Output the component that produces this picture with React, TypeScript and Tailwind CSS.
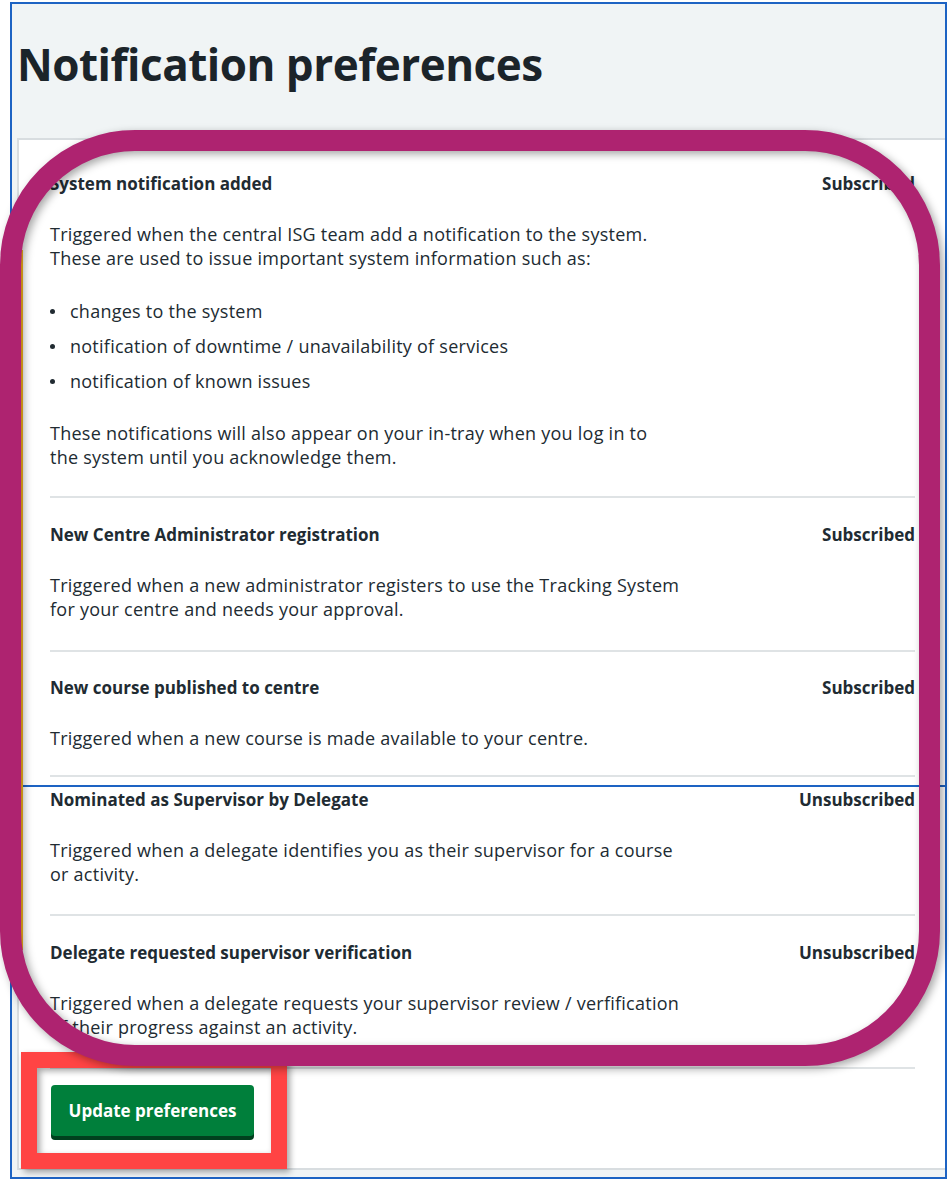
import React from 'react';

const body = { fontFamily: '"Open Sans", "Liberation Sans", sans-serif' };

interface RowProps {
  title: string;
  status: string;
  children: React.ReactNode;
  className?: string;
}

function PrefRow({ title, status, children, className }: RowProps) {
  return (
    <div className={className}>
      <div className="flex justify-between text-[17px] leading-6 font-bold text-[#212b32]">
        <span>{title}</span>
        <span>{status}</span>
      </div>
      <div className="mt-[26px] text-[18px] leading-6 tracking-[0.25px] text-[#212b32]">{children}</div>
    </div>
  );
}

export default function App() {
  return (
    <div className="relative w-[949px] h-[1181px] bg-white overflow-hidden" style={body}>
      <div className="relative ml-[10px] mt-[2px] w-[937px] h-[1177px] border-2 border-[#1d63c3] bg-[#f0f4f5]">
        <h1 className="pt-[32px] pl-[5px] text-[44px] leading-[56px] font-bold text-[#1b242a] tracking-[-0.5px]">
          Notification preferences
        </h1>

        <div className="mt-[46px] ml-[5px] bg-white border-2 border-r-0 border-[#d8dde0] pl-[31px] pr-[30px] pt-[32px] pb-[32px]">
          <PrefRow title="System notification added" status="Subscribed" className="border-b-2 border-[#dfe3e5] pb-[27px]">
            <p>
              Triggered when the central ISG team add a notification to the system.
              <br />
              These are used to issue important system information such as:
            </p>
            <ul className="mt-[29px]">
              {['changes to the system', 'notification of downtime / unavailability of services', 'notification of known issues'].map((t) => (
                <li key={t} className="flex items-center mb-[11px]">
                  <span className="w-5 shrink-0">
                    <span className="block w-[5px] h-[5px] rounded-full bg-[#212b32]" />
                  </span>
                  <span>{t}</span>
                </li>
              ))}
            </ul>
            <p className="mt-[28px]">
              These notifications will also appear on your in-tray when you log in to
              <br />
              the system until you acknowledge them.
            </p>
          </PrefRow>

          <PrefRow title="New Centre Administrator registration" status="Subscribed" className="pt-[25px] pb-[29px] border-b-2 border-[#dfe3e5]">
            <p>
              Triggered when a new administrator registers to use the Tracking System
              <br />
              for your centre and needs your approval.
            </p>
          </PrefRow>

          <PrefRow title="New course published to centre" status="Subscribed" className="pt-[24px] pb-[25px] border-b-2 border-[#dfe3e5]">
            <p>Triggered when a new course is made available to your centre.</p>
          </PrefRow>

          <PrefRow title="Nominated as Supervisor by Delegate" status="Unsubscribed" className="pt-[11px] pb-[28px] border-b-2 border-[#dfe3e5]">
            <p>
              Triggered when a delegate identifies you as their supervisor for a course
              <br />
              or activity.
            </p>
          </PrefRow>

          <PrefRow title="Delegate requested supervisor verification" status="Unsubscribed" className="pt-[25px] pb-[28px] border-b-2 border-[#dfe3e5]">
            <p>
              Triggered when a delegate requests your supervisor review / verfification
              <br />
              of their progress against an activity.
            </p>
          </PrefRow>

          <button className="mt-[16px] ml-[1px] w-[203px] h-[51px] rounded bg-[#007f3b] text-white text-[17px] font-bold shadow-[0_4px_0_#00401e]">
            Update preferences
          </button>
        </div>

        {/* stitch line from the screenshot */}
        <div className="absolute left-0 right-[-2px] top-[781px] h-[2px] bg-[#1d63c3]" />
      </div>

      {/* annotations */}
      <div className="absolute left-[21px] top-[250px] w-[2px] h-[700px] bg-[#ffb81c]" />
      <div className="absolute left-[21px] top-[1052px] w-[266px] h-[117px] border-[16px] border-[#ff4444] drop-shadow-[3px_3px_3px_rgba(0,0,0,0.35)]" />
      <div className="absolute left-0 top-[130px] w-[940px] h-[936px] border-[21px] border-[#ae2370] rounded-[135px] drop-shadow-[3px_3px_4px_rgba(0,0,0,0.35)]" />
    </div>
  );
}
